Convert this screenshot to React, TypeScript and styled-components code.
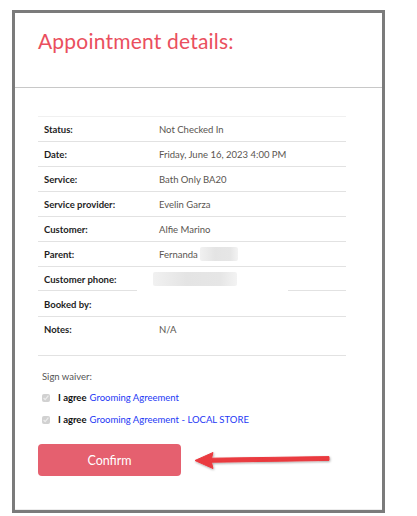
import React from "react";
import styled, { createGlobalStyle } from "styled-components";

const GlobalStyle = createGlobalStyle`
  html, body {
    margin: 0;
    padding: 0;
    background: #ffffff;
  }
  body {
    font-family: Lato, "Open Sans", sans-serif;
  }
`;

const Frame = styled.div`
  width: 367px;
  height: 497px;
  margin: 10px 0 0 12px;
  border: 3px solid #7b7b7b;
  background: #fff;
  display: flex;
  flex-direction: column;
`;

const Header = styled.div`
  height: 75px;
  padding: 15px 0 0 23px;
  box-sizing: border-box;
  border-bottom: 1px solid #c8c8c8;
`;

const Title = styled.h1`
  margin: 0;
  font-size: 21px;
  font-weight: 400;
  color: #ea4f5e;
  letter-spacing: 0.2px;
`;

const Body = styled.div`
  flex: 1;
  padding: 28px 36px 0 23px;
  border-bottom: 1px solid #ececec;
`;

const Table = styled.div`
  border-top: 1px solid #f0f0f0;
`;

const Row = styled.div<{ $tall?: boolean; $gap?: [number, number] }>`
  display: flex;
  align-items: ${(p) => (p.$tall ? "flex-start" : "center")};
  height: ${(p) => (p.$tall ? 31 : 24)}px;
  padding-top: ${(p) => (p.$tall ? 7 : 0)}px;
  font-size: 9.5px;
  background: ${(p) =>
    p.$gap
      ? `linear-gradient(to right, #e2e2e2 ${p.$gap[0]}px, transparent ${p.$gap[0]}px, transparent ${p.$gap[1]}px, #e2e2e2 ${p.$gap[1]}px) bottom / 100% 1px no-repeat`
      : "none"};
  border-bottom: 1px solid ${(p) => (p.$gap ? "transparent" : "#e2e2e2")};
`;

const Label = styled.div`
  width: 115px;
  padding-left: 6px;
  color: #1e1e1e;
  font-weight: 700;
`;

const Value = styled.div`
  color: #5a5550;
  display: flex;
  align-items: center;
`;

const Blur = styled.span<{ $w: number; $ml?: number }>`
  display: inline-block;
  width: ${(p) => p.$w}px;
  height: 14px;
  margin-left: ${(p) => p.$ml ?? 0}px;
  background: linear-gradient(to right, #f1f1f1, #e4e4e4 40%, #e6e6e6 80%, #f3f3f3);
  border-radius: 2px;
`;

const Waiver = styled.div`
  padding: 15px 0 0 4px;
  display: flex;
  flex-direction: column;
  gap: 9px;
  font-size: 9.5px;
`;

const WaiverLabel = styled.div`
  color: #555;
`;

const Agree = styled.label`
  display: flex;
  align-items: center;
  color: #111;
  font-weight: 700;
  height: 13px;
`;

const Check = styled.input`
  width: 8px;
  height: 8px;
  margin: 0 8px 0 0;
  accent-color: #cfcfcf;
`;

const Link = styled.a`
  color: #2438f5;
  font-weight: 400;
  margin-left: 3px;
  text-decoration: none;
`;

const Actions = styled.div`
  display: flex;
  align-items: center;
  margin-top: 18px;
`;

const ConfirmButton = styled.button`
  width: 143px;
  height: 32px;
  border: none;
  border-radius: 4px;
  background: #e5606f;
  color: #fff;
  font-family: Lato, sans-serif;
  font-size: 12.5px;
  cursor: pointer;
`;

const Arrow = styled.svg`
  margin-left: 13px;
  width: 140px;
  height: 24px;
`;

const rows: { label: string; value: React.ReactNode; gap?: [number, number]; tall?: boolean }[] = [
  { label: "Status:", value: "Not Checked In" },
  { label: "Date:", value: "Friday, June 16, 2023 4:00 PM" },
  { label: "Service:", value: "Bath Only BA20" },
  { label: "Service provider:", value: "Evelin Garza" },
  { label: "Customer:", value: "Alfie Marino" },
  {
    label: "Parent:",
    value: (
      <>
        Fernanda <Blur $w={38} $ml={2} />
      </>
    ),
  },
  { label: "Customer phone:", value: <Blur $w={84} $ml={-6} />, gap: [99, 250] },
  { label: "Booked by:", value: "" },
  { label: "Notes:", value: "N/A", tall: true },
];

export default function App() {
  return (
    <>
      <GlobalStyle />
      <Frame>
        <Header>
          <Title>Appointment details:</Title>
        </Header>
        <Body>
          <Table>
            {rows.map((r) => (
              <Row key={r.label} $gap={r.gap} $tall={r.tall}>
                <Label>{r.label}</Label>
                <Value>{r.value}</Value>
              </Row>
            ))}
          </Table>
          <Waiver>
            <WaiverLabel>Sign waiver:</WaiverLabel>
            <Agree>
              <Check type="checkbox" checked disabled readOnly />
              I agree<Link href="#">Grooming Agreement</Link>
            </Agree>
            <Agree>
              <Check type="checkbox" checked disabled readOnly />
              I agree<Link href="#">Grooming Agreement - LOCAL STORE</Link>
            </Agree>
          </Waiver>
          <Actions>
            <ConfirmButton>Confirm</ConfirmButton>
            <Arrow viewBox="0 0 140 24">
              <defs>
                <filter id="sh" x="-10%" y="-50%" width="120%" height="200%">
                  <feDropShadow dx="0.6" dy="1" stdDeviation="0.8" floodColor="#000" floodOpacity="0.35" />
                </filter>
              </defs>
              <g filter="url(#sh)" fill="#ea3a3f" stroke="#ea3a3f" strokeLinejoin="round">
                <path d="M18 10.2 L135 8.6 L135 12.4 L18 14.2 Z" strokeWidth="1" strokeLinecap="round" />
                <path d="M1 12.5 L19 4.5 L17 12.3 L19 20.5 Z" strokeWidth="1" />
              </g>
            </Arrow>
          </Actions>
        </Body>
      </Frame>
    </>
  );
}
